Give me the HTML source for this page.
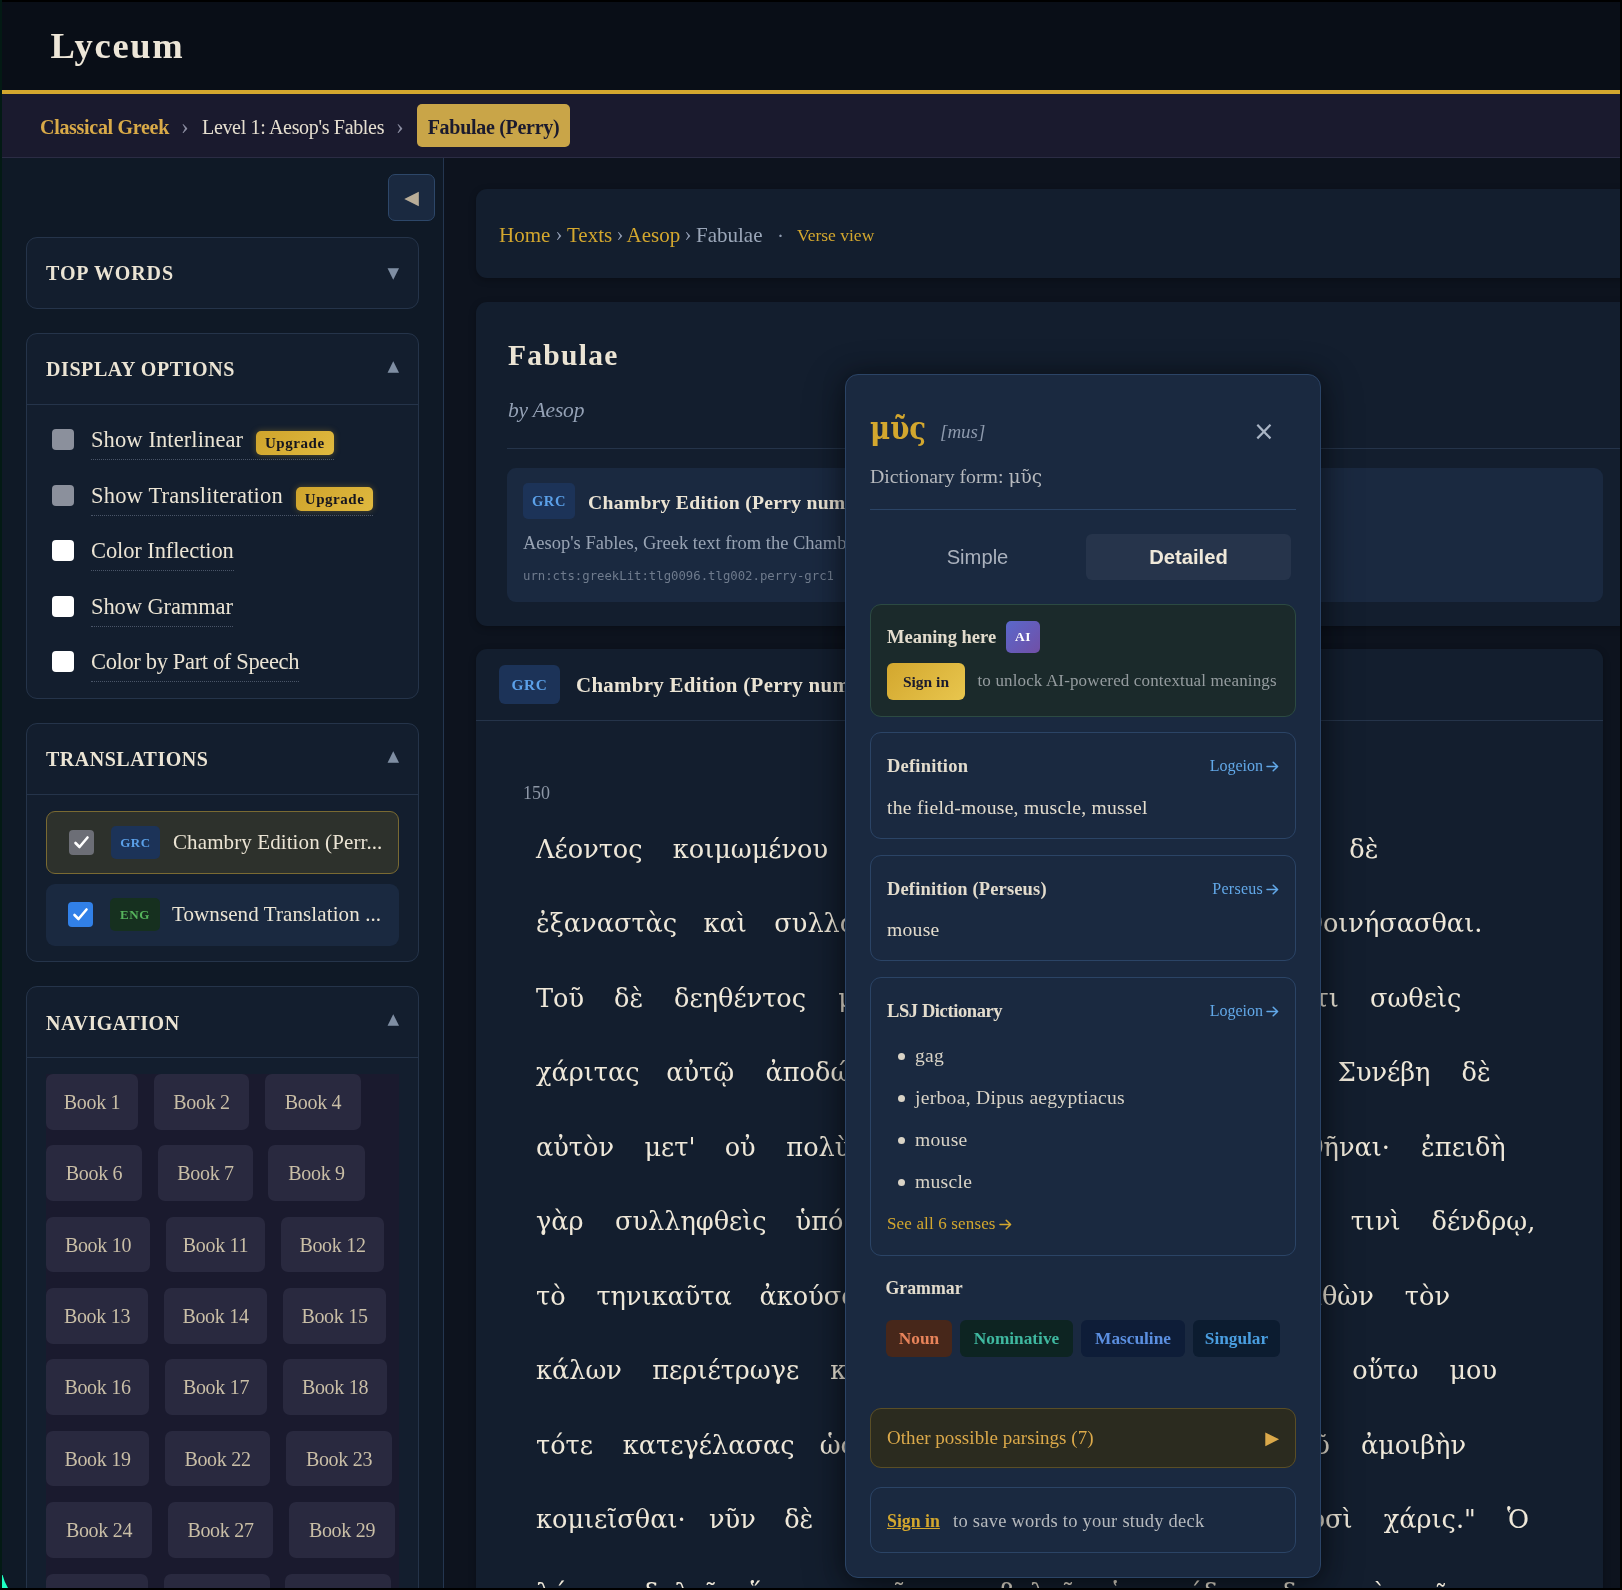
<!DOCTYPE html>
<html lang="en">
<head>
<meta charset="utf-8">
<title>Lyceum – Fabulae (Perry)</title>
<style>
*{box-sizing:border-box;margin:0;padding:0}
html,body{width:1622px;height:1590px;overflow:hidden;background:#000}
body{font-family:"Liberation Serif","DejaVu Serif",serif;color:#ebe4d4;position:relative}
.grk{font-family:"DejaVu Serif","Liberation Serif",serif}
.sym{font-family:"DejaVu Sans","Liberation Sans",sans-serif}
#edge{position:absolute;left:0;top:0;width:2px;height:1588px;background:#031a14}
#corner{position:absolute;left:0;top:1417px;width:6px;height:13px;background:#1effc3;z-index:5;clip-path:polygon(0 0,10% 0,45% 50%,100% 100%,0 100%)}
#app{position:absolute;left:2px;top:2px;width:1618px;height:1586px;overflow:hidden;background:#0d131e;will-change:transform}

/* ---------- top header ---------- */
#top{position:absolute;left:0;top:0;width:1618px;height:88px;background:#090e17}
#top h1{position:absolute;left:48.5px;top:21.5px;font-size:36.5px;line-height:44px;font-weight:bold;letter-spacing:1.7px;color:#ede6d8}
#gold{position:absolute;left:0;top:88px;width:1618px;height:4px;background:#d3a72e}
#crumbs{position:absolute;left:0;top:92px;width:1618px;height:64px;background:#1a1a2e;border-bottom:1px solid #2b2c44}
#crumbs span{position:absolute;top:0;line-height:66px;font-size:20px;white-space:nowrap}
#crumbs .c1{left:38px;color:#d9aa48;font-weight:bold;letter-spacing:-.3px}
#crumbs .sep{color:#8a8ca0;font-size:23px;line-height:65px}
#crumbs .c2{left:200px;color:#e6dfd0;letter-spacing:-.33px}
#crumbs .c3{left:415px;top:10px;height:43px;width:153px;line-height:46px;background:#c9a548;color:#1a1a2e;font-weight:bold;border-radius:5px;text-align:center;letter-spacing:-.3px}

/* ---------- sidebar ---------- */
#side{position:absolute;left:0;top:156px;width:442px;height:1430px;background:#0f1926;border-right:1px solid #243650;overflow:hidden}
#collapse{position:absolute;left:386px;top:16px;width:47px;height:47px;border:1px solid #2d4769;border-radius:7px;background:#1a2940;color:#b9ad98;font-size:19px;line-height:45px;text-align:center}
.panel{position:absolute;left:24px;width:393px;background:#131e2e;border:1px solid #25344a;border-radius:11px;overflow:hidden}
.panel h2{height:70px;line-height:70px;padding-left:19px;font-size:20px;font-weight:bold;letter-spacing:.9px;color:#ebe4d4;position:relative}
.panel h2 i.up3{top:-3px}
.panel h2 i{position:absolute;right:19px;top:0;font-style:normal;font-size:15px;color:#7f8ea3;letter-spacing:0}
.panel .body{border-top:1px solid #25344a}

/* display options */
.opt{position:absolute;left:0;width:100%;height:30px}
.opt .cb{position:absolute;left:25px;top:5px;width:22px;height:21px;border-radius:4px;background:#fff}
.opt .cb.dis{background:#8b909c}
.opt label{position:absolute;left:64px;top:3px;height:33px;line-height:26px;font-size:22.5px;color:#ebe4d4;border-bottom:1px dotted #4a5568;white-space:nowrap;letter-spacing:.05px}
.up{display:inline-block;vertical-align:-1px;margin-left:7px;height:24px;line-height:24px;padding:0 9px;border-radius:5px;background:linear-gradient(135deg,#cfa42c,#e0b93f);color:#15151f;font-size:15px;font-weight:bold;letter-spacing:.55px;box-shadow:0 0 6px rgba(212,167,44,.35)}
/* translations */
.tr{position:absolute;left:19px;width:353px;height:62px;border-radius:9px;background:#1a2940}
.tr.sel{background:#2d312c;border:1px solid #7a6a32;height:63px}
.tr .chk{position:absolute;left:22px;top:18px;width:25px;height:25px;border-radius:4px;background:#3180e8}
.tr.sel .chk{background:#6c6e76;left:22px;top:18px}
.tr .chk svg{position:absolute;left:3px;top:3px}
.lang{position:absolute;left:64px;top:14px;width:49px;height:33px;border-radius:5px;background:#1c3358;color:#5ba0e8;font-size:13px;font-weight:bold;line-height:34px;text-align:center;letter-spacing:.6px}
.lang.eng{background:#16301f;color:#56b35c;width:50px}
.tr .nm{position:absolute;left:126px;top:0;line-height:61px;font-size:21px;color:#ebe4d4;white-space:nowrap;letter-spacing:.1px}
/* navigation */
#navgrid{position:absolute;left:19px;top:16px;width:353px;height:600px;background:#1a1a2e}
.bk{position:absolute;height:55.5px;border-radius:7px;background:#29293f;color:#c9bea6;font-size:20px;line-height:57px;text-align:center;white-space:nowrap;letter-spacing:-.3px}

/* ---------- main ---------- */
#main{position:absolute;left:443px;top:156px;width:1175px;height:1430px;background:#0d131e;overflow:hidden}
.card{position:absolute;left:31px;background:#131e2e;border-radius:11px;box-shadow:0 2px 7px rgba(0,0,0,.28)}
#bc{top:31px;width:1160px;height:89px}
#bc span{position:absolute;top:0;line-height:92px;font-size:21px;white-space:nowrap;color:#d3a72e}
#bc .s{color:#8f9bb0;font-size:21px;line-height:91px}
#work{top:144px;width:1160px;height:324px}
#work h1{position:absolute;left:32px;top:33px;font-size:29.5px;line-height:40px;font-weight:bold;color:#ebe4d4;letter-spacing:1.3px}
#work .by{position:absolute;left:32px;top:93px;font-size:21.5px;line-height:30px;font-style:italic;color:#94a1b5;letter-spacing:-.2px}
#work hr{position:absolute;left:31px;top:146px;width:1129px;border:0;border-top:1px solid #25344a}
#ed{position:absolute;left:31px;top:166px;width:1096px;height:134px;border-radius:9px;background:#1a2940}
#ed .lang{left:16px;top:15px;width:52px;height:36px;line-height:37px;font-size:14.5px;letter-spacing:.6px}
#ed .t{position:absolute;left:81px;top:15px;line-height:38px;font-size:19.7px;font-weight:bold;white-space:nowrap;color:#ebe4d4;letter-spacing:.25px}
#ed .d{position:absolute;left:16px;top:60px;line-height:30px;font-size:18.5px;white-space:nowrap;color:#98a3b3}
#ed .u{position:absolute;left:16px;top:98px;line-height:20px;font-size:12.3px;white-space:nowrap;color:#6f7b8d;font-family:"DejaVu Sans Mono","Liberation Mono",monospace}
#reader{top:491px;width:1127px;height:1000px;border-bottom-left-radius:0;border-bottom-right-radius:0}
#reader .hd{position:absolute;left:0;top:0;width:100%;height:72px;border-bottom:1px solid #25344a}
#reader .hd .lang{left:23px;top:16px;width:61px;height:39px;line-height:40px;font-size:15.3px;border-radius:6px;letter-spacing:.7px}
#reader .hd .t{position:absolute;left:100px;top:16px;line-height:40px;font-size:20.9px;font-weight:bold;white-space:nowrap;color:#ebe4d4;letter-spacing:.3px}
#reader .no{position:absolute;left:47px;top:132px;font-size:18px;line-height:24px;color:#8d97a6}
#reader p .w{display:inline-block;white-space:nowrap}
#reader p .rt{position:absolute;top:0}
#reader p{position:absolute;left:60px;width:1067px;font-size:25.6px;line-height:40px;white-space:nowrap;word-spacing:23px;color:#efe8d9}

/* ---------- popup ---------- */
#pop{position:absolute;left:843px;top:372px;width:476px;height:1204px;background:#1a2940;border:1px solid #2b4466;border-radius:13px;box-shadow:0 10px 40px rgba(0,0,0,.42),0 0 22px rgba(0,0,0,.3)}
#pop .w{position:absolute;left:24px;top:28px;font-size:32px;transform:scaleX(.86);transform-origin:0 50%;line-height:50px;font-weight:bold;color:#d3a72e;font-family:"DejaVu Serif","Liberation Serif",serif}
#pop .tl{position:absolute;left:94px;top:35px;font-size:19px;line-height:44px;font-style:italic;color:#8d99ac}
#pop .x{position:absolute;left:400px;top:36px;width:36px;height:40px;line-height:40px;text-align:center;font-size:26px;color:#a9b4c4;font-family:"DejaVu Sans","Liberation Sans",sans-serif}
#pop .df{position:absolute;left:24px;top:85px;font-size:19.8px;line-height:32px;color:#b6b9bd;white-space:nowrap}
#pop .df .grk{font-size:18.5px}
#pop .hr{position:absolute;left:24px;top:134px;width:426px;height:1px;background:#2b4466}
#tabs{position:absolute;left:24px;top:154px;width:426px;height:56px}
#tabs span{position:absolute;top:5px;height:46px;line-height:46px;width:205px;text-align:center;font-family:"Liberation Sans","DejaVu Sans",sans-serif;font-size:20.2px;border-radius:6px}
#tabs .a{left:5px;color:#aab1bd}
#tabs .b{left:216px;background:#26344b;color:#efe8d9;font-weight:bold}
.box{position:absolute;left:24px;width:426px;border:1px solid #2b4466;border-radius:11px;background:#1a2940}
.box .h{position:absolute;left:16px;font-size:18.5px;font-weight:bold;color:#e3dccd;white-space:nowrap;line-height:30px}
.box .lk{position:absolute;right:16px;font-size:16px;color:#62a8e8;white-space:nowrap;line-height:30px}
.box .tx{position:absolute;left:16px;font-size:19.6px;letter-spacing:.28px;color:#e3dccd;white-space:nowrap;line-height:30px}
.arr{display:inline-block;vertical-align:-1px;margin-left:3px}
#ai{top:229px;height:113px;background:#1b2a2b;border-color:#2c4a42}
#ai .badge{position:absolute;left:135px;top:16px;width:34px;height:32px;border-radius:5px;background:linear-gradient(135deg,#5a68cc,#714fa6);color:#fff;font-size:13.5px;font-weight:bold;line-height:32px;text-align:center;letter-spacing:.5px}
#ai .btn{position:absolute;left:16px;top:58px;width:78px;height:37px;border-radius:6px;background:linear-gradient(135deg,#d3a72e,#e8c64e);color:#1a1a2e;font-size:15.5px;font-weight:bold;line-height:37px;text-align:center}
#ai .note{position:absolute;left:106.5px;top:61px;font-size:17px;line-height:30px;color:#959c9f;white-space:nowrap;letter-spacing:.14px}
.lsj li{position:absolute;left:44px;list-style:none;font-size:19.6px;letter-spacing:.28px;line-height:30px;color:#d9d3c6;white-space:nowrap}
.lsj li:before{content:"";position:absolute;left:-17px;top:12px;width:7px;height:7px;border-radius:50%;background:#d9d3c6}
.tag{position:absolute;top:945px;height:37px;line-height:38px;border-radius:6px;font-size:17.3px;font-weight:bold;text-align:center;white-space:nowrap}
</style>
</head>
<body>
<div id="edge"></div>
<div id="app">

<header id="top"><h1>Lyceum</h1></header>
<div id="gold"></div>
<nav id="crumbs">
  <span class="c1">Classical Greek</span>
  <span class="sep" style="left:179px">›</span>
  <span class="c2">Level 1: Aesop's Fables</span>
  <span class="sep" style="left:394px">›</span>
  <span class="c3">Fabulae (Perry)</span>
</nav>

<aside id="side">
  <div id="corner"></div>
  <div id="collapse" class="sym">◀</div>

  <section class="panel" style="top:79px;height:72px">
    <h2>TOP WORDS<i class="sym">▼</i></h2>
  </section>

  <section class="panel" style="top:175px;height:366px">
    <h2 style="letter-spacing:.58px">DISPLAY OPTIONS<i class="sym up3">▲</i></h2>
    <div class="body" style="position:relative;height:294px">
      <div class="opt" style="top:19px"><span class="cb dis"></span><label style="letter-spacing:.1px">Show Interlinear <span class="up">Upgrade</span></label></div>
      <div class="opt" style="top:75px"><span class="cb dis"></span><label style="letter-spacing:.19px">Show Transliteration <span class="up">Upgrade</span></label></div>
      <div class="opt" style="top:130px"><span class="cb"></span><label style="letter-spacing:-.1px">Color Inflection</label></div>
      <div class="opt" style="top:186px"><span class="cb"></span><label style="letter-spacing:-.1px">Show Grammar</label></div>
      <div class="opt" style="top:241px"><span class="cb"></span><label style="letter-spacing:-.35px">Color by Part of Speech</label></div>
    </div>
  </section>

  <section class="panel" style="top:565px;height:239px">
    <h2 style="letter-spacing:.5px">TRANSLATIONS<i class="sym up3">▲</i></h2>
    <div class="body" style="position:relative;height:167px">
      <div class="tr sel" style="top:16px"><span class="chk"><svg width="19" height="19" viewBox="0 0 19 19"><path d="M3.5 10l4 4 8-9.5" fill="none" stroke="#fff" stroke-width="2.6" stroke-linecap="round" stroke-linejoin="round"/></svg></span><span class="lang">GRC</span><span class="nm">Chambry Edition (Perr...</span></div>
      <div class="tr" style="top:89px"><span class="chk"><svg width="19" height="19" viewBox="0 0 19 19"><path d="M3.5 10l4 4 8-9.5" fill="none" stroke="#fff" stroke-width="2.6" stroke-linecap="round" stroke-linejoin="round"/></svg></span><span class="lang eng">ENG</span><span class="nm">Townsend Translation ...</span></div>
    </div>
  </section>

  <section class="panel" style="top:828px;height:700px;border-bottom-left-radius:0;border-bottom-right-radius:0">
    <h2 style="letter-spacing:.55px;line-height:73px">NAVIGATION<i class="sym up3" style="top:-4px">▲</i></h2>
    <div class="body" style="position:relative;height:640px">
      <div id="navgrid">
        <a class="bk" style="left:0px;top:0.0px;width:92px">Book 1</a>
        <a class="bk" style="left:108px;top:0.0px;width:95px">Book 2</a>
        <a class="bk" style="left:219px;top:0.0px;width:96px">Book 4</a>
        <a class="bk" style="left:0px;top:71.4px;width:96px">Book 6</a>
        <a class="bk" style="left:112px;top:71.4px;width:95px">Book 7</a>
        <a class="bk" style="left:222px;top:71.4px;width:97px">Book 9</a>
        <a class="bk" style="left:0px;top:142.7px;width:104px">Book 10</a>
        <a class="bk" style="left:120px;top:142.7px;width:99px">Book 11</a>
        <a class="bk" style="left:235px;top:142.7px;width:103px">Book 12</a>
        <a class="bk" style="left:0px;top:214.1px;width:102px">Book 13</a>
        <a class="bk" style="left:118px;top:214.1px;width:103px">Book 14</a>
        <a class="bk" style="left:237px;top:214.1px;width:103px">Book 15</a>
        <a class="bk" style="left:0px;top:285.4px;width:103px">Book 16</a>
        <a class="bk" style="left:119px;top:285.4px;width:102px">Book 17</a>
        <a class="bk" style="left:237px;top:285.4px;width:104px">Book 18</a>
        <a class="bk" style="left:0px;top:356.8px;width:103px">Book 19</a>
        <a class="bk" style="left:119px;top:356.8px;width:105px">Book 22</a>
        <a class="bk" style="left:240px;top:356.8px;width:106px">Book 23</a>
        <a class="bk" style="left:0px;top:428.2px;width:106px">Book 24</a>
        <a class="bk" style="left:122px;top:428.2px;width:105px">Book 27</a>
        <a class="bk" style="left:243px;top:428.2px;width:106px">Book 29</a>
        <a class="bk" style="left:0px;top:499.5px;width:102px">Book 30</a>
        <a class="bk" style="left:118px;top:499.5px;width:106px">Book 31</a>
        <a class="bk" style="left:239px;top:499.5px;width:106px">Book 32</a>
      </div>
    </div>
  </section>
</aside>

<main id="main">
  <div class="card" id="bc">
    <span style="left:23px">Home</span><span class="s" style="left:79.5px">›</span><span style="left:91px">Texts</span><span class="s" style="left:140.5px">›</span><span style="left:150.5px">Aesop</span><span class="s" style="left:208.5px">›</span><span style="left:220px;color:#9aa6b8">Fabulae</span><span class="s" style="left:301px;line-height:94px">·</span><span style="left:321px;font-size:17.5px">Verse view</span>
  </div>
  <div class="card" id="work">
    <h1>Fabulae</h1>
    <div class="by">by Aesop</div>
    <hr>
    <div id="ed">
      <span class="lang">GRC</span>
      <span class="t">Chambry Edition (Perry numbering)</span>
      <span class="d">Aesop's Fables, Greek text from the Chambry edition with Perry index numbers</span>
      <span class="u">urn:cts:greekLit:tlg0096.tlg002.perry-grc1</span>
    </div>
  </div>
  <div class="card" id="reader">
    <div class="hd"><span class="lang">GRC</span><span class="t">Chambry Edition (Perry numbering)</span></div>
    <div class="no">150</div>
    <p class="grk" style="top:179.5px"><span class="w" style="width:105.6px">Λέοντος</span> κοιμωμένου μῦς τῷ <span class="rt" style="right:224.6px">σώματι ἐπέδραμεν. Ὁ δὲ</span></p>
    <p class="grk" style="top:254.0px"><span class="w" style="width:136.3px">ἐξαναστὰς</span> <span class="w" style="width:39.8px">καὶ</span> συλλαβὼν αὐτὸν <span class="rt" style="right:120.7px">οἷός τε ἦν καταθοινήσασθαι.</span></p>
    <p class="grk" style="top:328.5px"><span class="w" style="width:46.9px">Τοῦ</span> <span class="w" style="width:28.8px">δὲ</span> <span class="w" style="width:133.1px">δεηθέντος</span> μεθεῖναι <span class="rt" style="right:141.7px">αὐτὸν καὶ λέγοντος ὅτι σωθεὶς</span></p>
    <p class="grk" style="top:403.0px"><span class="w" style="width:99.1px">χάριτας</span> <span class="w" style="width:68.1px">αὐτῷ</span> ἀποδώσει, γελάσας <span class="rt" style="right:112.3px">ἀπέλυσεν αὐτόν. Συνέβη δὲ</span></p>
    <p class="grk" style="top:477.5px"><span class="w" style="width:77.3px">αὐτὸν</span> <span class="w" style="width:49.1px">μετ'</span> <span class="w" style="width:30.5px">οὐ</span> πολὺ τῇ τοῦ <span class="rt" style="right:97.3px">μυὸς χάριτι περισωθῆναι· ἐπειδὴ</span></p>
    <p class="grk" style="top:552.0px"><span class="w" style="width:47.8px">γὰρ</span> <span class="w" style="width:149.5px">συλληφθεὶς</span> ὑπό τινων <span class="rt" style="right:67.7px">κυνηγετῶν κάλῳ ἐδέθη τινὶ δένδρῳ,</span></p>
    <p class="grk" style="top:626.5px"><span class="w" style="width:29.3px">τὸ</span> <span class="w" style="width:132.0px">τηνικαῦτα</span> ἀκούσας ὁ μῦς <span class="rt" style="right:153px">αὐτοῦ στένοντος ἐλθὼν τὸν</span></p>
    <p class="grk" style="top:701.0px"><span class="w" style="width:85.1px">κάλων</span> <span class="w" style="width:146.8px">περιέτρωγε</span> καὶ λύσας <span class="rt" style="right:106px">αὐτὸν ἔφη· "Σὺ μὲν οὕτω μου</span></p>
    <p class="grk" style="top:775.5px"><span class="w" style="width:55.7px">τότε</span> <span class="w" style="width:165.7px">κατεγέλασας</span> ὡς μὴ <span class="rt" style="right:137px">προσδεχόμενος παρ' ἐμοῦ ἀμοιβὴν</span></p>
    <p class="grk" style="top:850.0px"><span class="w" style="width:141.9px">κομιεῖσθαι·</span> <span class="w" style="width:44.0px">νῦν</span> δὲ εὖ ἴσθι <span class="rt" style="right:74px">ὅτι ἐστὶ καὶ παρὰ μυσὶ χάρις." Ὁ</span></p>
    <p class="grk" style="top:923.5px">λόγος δηλοῖ ὅτι καιροῦ μεταβολαῖς <span class="rt" style="right:136px">οἱ σφόδρα δυνατοὶ τῶν</span></p>
  </div>
</main>

<div id="pop">
  <span class="w">μῦς</span><span class="tl">[mus]</span><span class="x">×</span>
  <div class="df">Dictionary form: <span class="grk">μῦς</span></div>
  <div class="hr"></div>
  <div id="tabs"><span class="a">Simple</span><span class="b">Detailed</span></div>

  <div class="box" id="ai">
    <span class="h" style="top:17px">Meaning here</span><span class="badge">AI</span>
    <span class="btn">Sign in</span><span class="note">to unlock AI-powered contextual meanings</span>
  </div>

  <div class="box" style="top:357px;height:107px">
    <span class="h" style="top:18px;letter-spacing:.2px">Definition</span><span class="lk" style="top:18px">Logeion<svg class="arr" width="13" height="11" viewBox="0 0 13 11"><path d="M1 5.5h10.5M7.2 1.2l4.4 4.3-4.4 4.3" fill="none" stroke="#62a8e8" stroke-width="1.5" stroke-linecap="round" stroke-linejoin="round"/></svg></span>
    <span class="tx" style="top:60px">the field-mouse, muscle, mussel</span>
  </div>

  <div class="box" style="top:480px;height:106px">
    <span class="h" style="top:18px;letter-spacing:.15px">Definition (Perseus)</span><span class="lk" style="top:18px;letter-spacing:.25px">Perseus<svg class="arr" width="13" height="11" viewBox="0 0 13 11"><path d="M1 5.5h10.5M7.2 1.2l4.4 4.3-4.4 4.3" fill="none" stroke="#62a8e8" stroke-width="1.5" stroke-linecap="round" stroke-linejoin="round"/></svg></span>
    <span class="tx" style="top:59px">mouse</span>
  </div>

  <div class="box lsj" style="top:602px;height:279px">
    <span class="h" style="top:18px;letter-spacing:-.4px">LSJ Dictionary</span><span class="lk" style="top:18px">Logeion<svg class="arr" width="13" height="11" viewBox="0 0 13 11"><path d="M1 5.5h10.5M7.2 1.2l4.4 4.3-4.4 4.3" fill="none" stroke="#62a8e8" stroke-width="1.5" stroke-linecap="round" stroke-linejoin="round"/></svg></span>
    <ul>
      <li style="top:63px">gag</li>
      <li style="top:105px">jerboa, Dipus aegyptiacus</li>
      <li style="top:147px">mouse</li>
      <li style="top:189px">muscle</li>
    </ul>
    <span class="lk" style="left:16px;right:auto;top:231px;color:#d3a72e;font-size:17px;letter-spacing:.15px">See all 6 senses<svg class="arr" width="13" height="11" viewBox="0 0 13 11"><path d="M1 5.5h10.5M7.2 1.2l4.4 4.3-4.4 4.3" fill="none" stroke="#d3a72e" stroke-width="1.5" stroke-linecap="round" stroke-linejoin="round"/></svg></span>
  </div>

  <div style="position:absolute;left:39.5px;top:897.5px;font-size:17.8px;font-weight:bold;color:#e3dccd;line-height:30px">Grammar</div>
  <span class="tag" style="left:40px;width:66px;background:#47271a;color:#e8835a">Noun</span>
  <span class="tag" style="left:114px;width:113px;background:#0d2422;color:#3fb8a0">Nominative</span>
  <span class="tag" style="left:235px;width:104px;background:#0e1d38;color:#5b8fe0">Masculine</span>
  <span class="tag" style="left:347px;width:87px;background:#0c1c30;color:#4a9ee0">Singular</span>

  <div class="box" style="top:1033px;height:60px;background:#2b2b1f;border-color:#5a4e26">
    <span class="tx" style="top:14px;color:#dba94a;font-size:19px;letter-spacing:.05px">Other possible parsings (7)</span>
    <span class="sym" style="position:absolute;right:16px;top:14px;line-height:30px;font-size:18px;color:#dba94a">▶</span>
  </div>

  <div class="box" style="top:1112px;height:66px">
    <span class="tx" style="top:17.5px;color:#d3a72e;font-weight:bold;text-decoration:underline;font-size:17.8px;letter-spacing:0">Sign in</span>
    <span class="tx" style="left:82px;top:17.5px;color:#b6b9bd;font-size:18.5px;letter-spacing:.25px">to save words to your study deck</span>
  </div>
</div>

</div>
</body>
</html>
